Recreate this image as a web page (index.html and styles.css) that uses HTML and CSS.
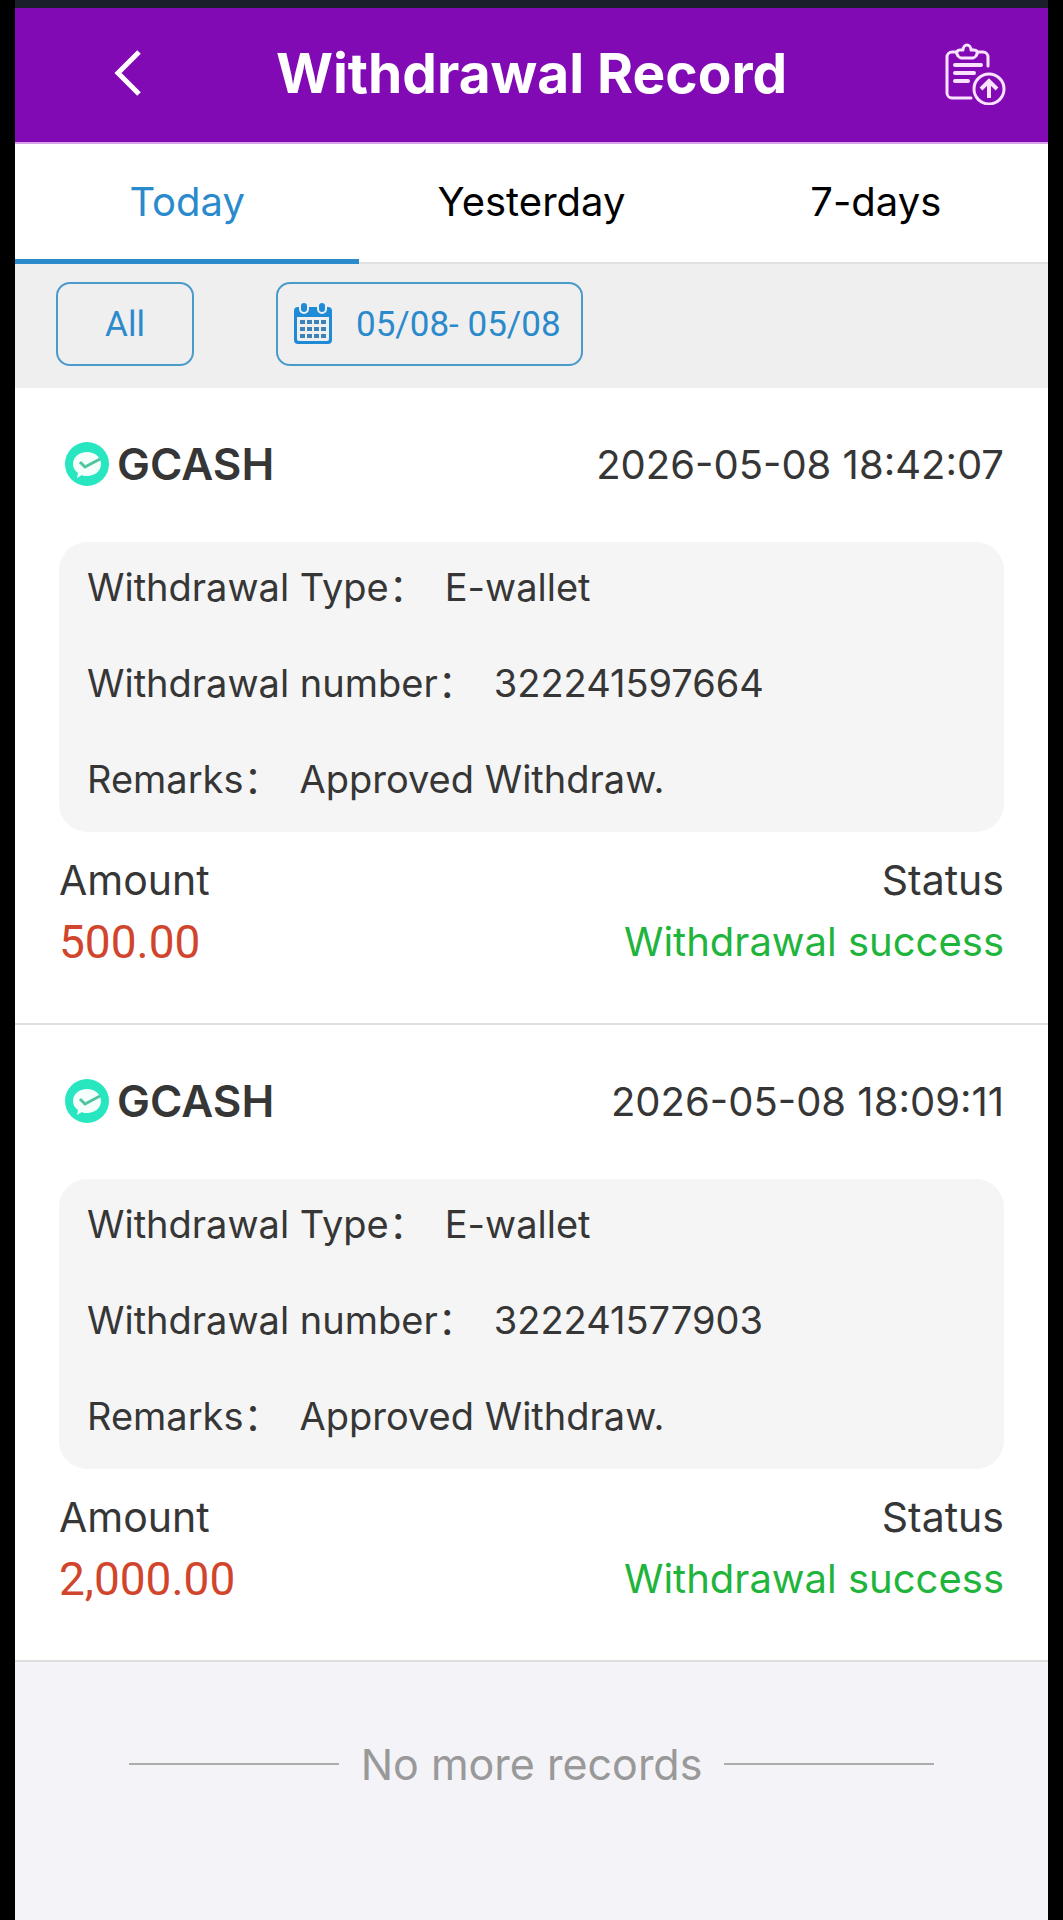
FILE: index.html
```html
<!DOCTYPE html>
<html lang="en">
<head>
    <meta charset="utf-8">
    <meta name="viewport" content="width=device-width, initial-scale=1">
    <title>Withdrawal Record</title>
    <link rel="stylesheet" href="styles.css">
</head>
<body>
    <!-- shared logo -->
    <svg class="defs" aria-hidden="true">
        <symbol id="gcash" viewBox="0 0 46 46">
            <circle cx="22" cy="23" r="22" fill="#28e6c0"/>
            <path d="M22 11c8 0 14 5 14 12s-6 12-14 12c-2 0-4 0-5-1l-5 3 1-5c-3-2-5-5-5-9 0-7 6-12 14-12z" fill="#f4fffc"/>
            <path d="M15 21l5 5 15-8" fill="none" stroke="#4fc4a0" stroke-width="3"/>
        </symbol>
    </svg>

    <div class="app">
        <header class="header">
            <button class="back-btn" aria-label="Back">
                <svg width="30" height="48" viewBox="0 0 30 48" fill="none" stroke="#fff" stroke-width="5">
                    <path d="M26 3L5 24l21 21"/>
                </svg>
            </button>
            <h1 class="title">Withdrawal Record</h1>
            <button class="record-btn" aria-label="Submit record">
                <svg width="64" height="64" viewBox="0 0 64 64" fill="none" stroke="#fbe3ff" stroke-width="3" stroke-linecap="round" stroke-linejoin="round">
                    <path d="M14 11H9a5 5 0 0 0-5 5v36a5 5 0 0 0 5 5h19"/>
                    <path d="M34 11h6a5 5 0 0 1 5 5v9"/>
                    <path d="M17 9h3c0-3 2-5 4-5s4 2 4 5h3c3 0 4 2 3 4l-1 2c-1 1-2 2-3 2H18c-1 0-2-1-3-2l-1-2c-1-2 0-4 3-4z"/>
                    <path d="M12 24h26M12 32h19M12 40h13" stroke-width="4"/>
                    <circle cx="46" cy="48" r="15"/>
                    <path d="M46 57V41M38 48l8-8 8 8" stroke-width="4" stroke-linecap="butt" stroke-linejoin="miter"/>
                </svg>
            </button>
        </header>

        <nav class="tabs">
            <button class="tab active">Today</button>
            <button class="tab">Yesterday</button>
            <button class="tab">7-days</button>
        </nav>

        <div class="filters">
            <button class="filter-btn type-btn">All</button>
            <button class="filter-btn date-btn">
                <svg width="38" height="44" viewBox="0 0 38 44" fill="#1f8bd6">
                    <path fill-rule="evenodd" d="M4 5h30a4 4 0 0 1 4 4v29a4 4 0 0 1-4 4H4a4 4 0 0 1-4-4V9a4 4 0 0 1 4-4zM3 15v22a2 2 0 0 0 2 2h28a2 2 0 0 0 2-2V15z"/>
                    <g stroke="#efefef" stroke-width="2">
                        <rect x="6" y="0" width="8" height="11" rx="4"/>
                        <rect x="24" y="0" width="8" height="11" rx="4"/>
                    </g>
                    <path d="M6 18h5v4H6zM13 18h5v4h-5zM20 18h5v4h-5zM27 18h5v4h-5zM6 25h5v4H6zM13 25h5v4h-5zM20 25h5v4h-5zM27 25h5v4h-5zM6 32h5v4H6zM13 32h5v4h-5zM20 32h5v4h-5zM27 32h5v4h-5z" fill="#3b83b8"/>
                </svg>
                <span>05/08- 05/08</span>
            </button>
        </div>

        <main class="records">
            <article class="record">
                <div class="record-head">
                    <h2 class="wallet"><svg class="wallet-logo" aria-hidden="true"><use href="#gcash"/></svg>GCASH</h2>
                    <time>2026-05-08 18:42:07</time>
                </div>
                <dl class="details">
                    <div class="detail">
                        <dt>Withdrawal Type：</dt>
                        <dd>E-wallet</dd>
                    </div>
                    <div class="detail">
                        <dt>Withdrawal number：</dt>
                        <dd>322241597664</dd>
                    </div>
                    <div class="detail">
                        <dt>Remarks：</dt>
                        <dd>Approved Withdraw.</dd>
                    </div>
                </dl>
                <div class="summary">
                    <div>
                        <div class="label">Amount</div>
                        <div class="amount">500.00</div>
                    </div>
                    <div class="summary-right">
                        <div class="label">Status</div>
                        <div class="status">Withdrawal success</div>
                    </div>
                </div>
            </article>

            <article class="record">
                <div class="record-head">
                    <h2 class="wallet"><svg class="wallet-logo" aria-hidden="true"><use href="#gcash"/></svg>GCASH</h2>
                    <time>2026-05-08 18:09:11</time>
                </div>
                <dl class="details">
                    <div class="detail">
                        <dt>Withdrawal Type：</dt>
                        <dd>E-wallet</dd>
                    </div>
                    <div class="detail">
                        <dt>Withdrawal number：</dt>
                        <dd>322241577903</dd>
                    </div>
                    <div class="detail">
                        <dt>Remarks：</dt>
                        <dd>Approved Withdraw.</dd>
                    </div>
                </dl>
                <div class="summary">
                    <div>
                        <div class="label">Amount</div>
                        <div class="amount">2,000.00</div>
                    </div>
                    <div class="summary-right">
                        <div class="label">Status</div>
                        <div class="status">Withdrawal success</div>
                    </div>
                </div>
            </article>
        </main>

        <div class="no-more">No more records</div>
    </div>
</body>
</html>
```
FILE: styles.css
```css
* {
    box-sizing: border-box;
}

body {
    margin: 0;
    padding: 0 15px;
    background: #000;
    font-family: Inter, "Noto Sans CJK SC", sans-serif;
    font-size: 40px;
    color: #363636;
}

button {
    border: none;
    padding: 0;
    background: none;
    font: inherit;
    color: inherit;
    cursor: pointer;
}

svg {
    display: block;
    flex-shrink: 0;
}

.defs {
    position: absolute;
    width: 0;
    height: 0;
}

.app {
    min-height: 100vh;
    background: #f3f3f8;
    border-top: 8px solid #1b1f2b;
}

/* header */
.header {
    display: grid;
    grid-template-columns: 1fr auto 1fr;
    align-items: center;
    height: 136px;
    padding: 0 41px 5px;
    background: #820ab4;
    border-bottom: 2px solid #d6a3e8;
}

.back-btn {
    justify-self: start;
    margin-left: 57px;
}

.title {
    margin: 0;
    font-size: 55px;
    font-weight: 700;
    color: #fff;
}

.record-btn {
    justify-self: end;
}

/* tabs */
.tabs {
    display: grid;
    grid-template-columns: repeat(3, 1fr);
    height: 120px;
    background: #fff;
    border-bottom: 2px solid #dfe1e2;
}

.tab {
    height: 120px;
    color: #000;
    border-bottom: 5px solid transparent;
}

.tab.active {
    color: #2b8acb;
    border-bottom-color: #2b8acb;
}

/* filters */
.filters {
    display: flex;
    gap: 82px;
    padding: 18px 41px 22px;
    background: #efefef;
}

.filter-btn {
    height: 84px;
    border: 2px solid #4a9bcb;
    border-radius: 14px;
    font-family: Roboto, sans-serif;
    font-size: 35px;
    color: #2b8acb;
}

.type-btn {
    width: 138px;
}

.date-btn {
    display: flex;
    align-items: center;
    gap: 24px;
    padding: 0 20px 0 16px;
}

/* records */
.record {
    padding: 43px 44px 50px;
    background: #fff;
    border-bottom: 2px solid #dfdfdf;
}

.record-head {
    display: flex;
    align-items: center;
    justify-content: space-between;
    height: 66px;
    padding-left: 6px;
    margin-bottom: 45px;
}

.wallet {
    display: flex;
    align-items: center;
    gap: 6px;
    margin: 0;
    font-size: 44px;
    font-weight: 600;
}

.wallet-logo {
    width: 46px;
    height: 46px;
}

.details {
    display: flex;
    flex-direction: column;
    gap: 46px;
    margin: 0;
    padding: 20px 28px 28px;
    font-size: 38px;
    line-height: 50px;
    background: #f5f5f5;
    border-radius: 28px;
}

.detail {
    display: flex;
    gap: 18px;
}

.detail dd {
    margin: 0;
}

.summary {
    display: flex;
    justify-content: space-between;
    padding-top: 17px;
    line-height: 62px;
}

.summary-right {
    text-align: right;
}

.label {
    font-size: 41px;
}

.amount {
    font-family: Roboto, sans-serif;
    font-size: 46px;
    color: #d0452c;
}

.status {
    color: #1fb43c;
}

/* list footer */
.no-more {
    display: flex;
    align-items: center;
    gap: 22px;
    padding: 76px 114px;
    font-size: 43px;
    color: #999;
}

.no-more::before,
.no-more::after {
    content: '';
    flex: 1;
    height: 2px;
    background: #adadad;
}
```
